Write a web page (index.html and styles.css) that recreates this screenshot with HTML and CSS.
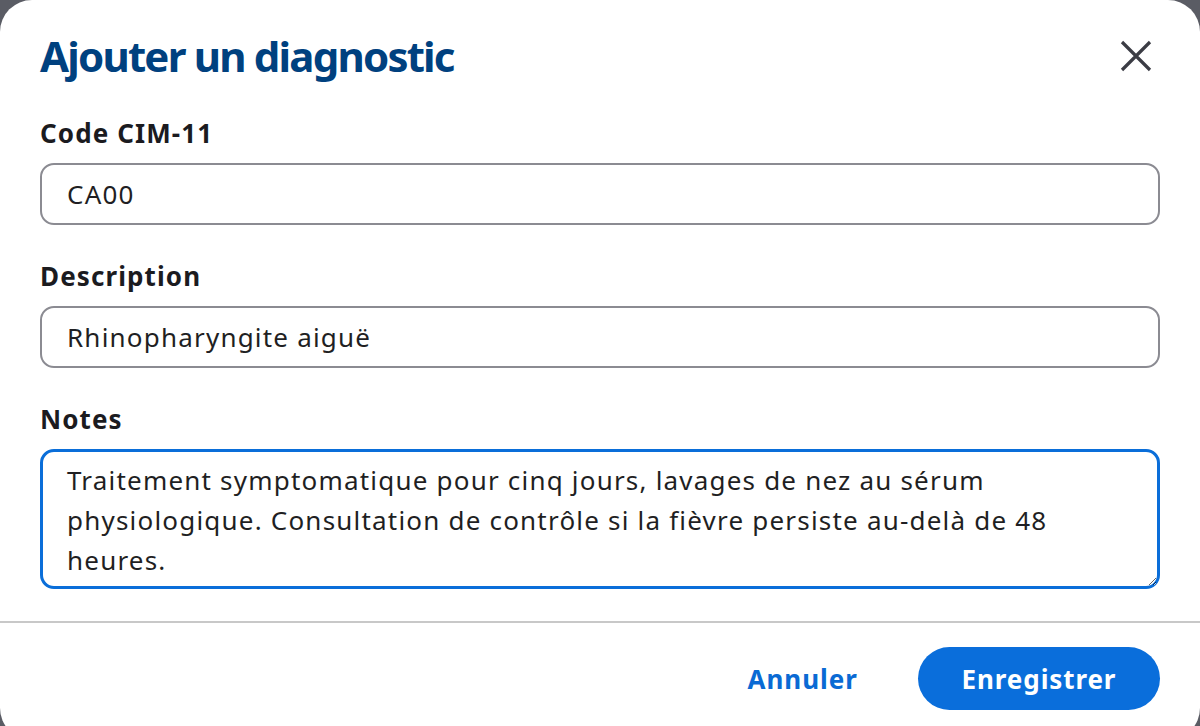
FILE: index.html
```html
<!DOCTYPE html>
<html lang="fr">
<head>
    <meta charset="UTF-8">
    <meta name="viewport" content="width=device-width, initial-scale=1.0">
    <title>Ajouter un diagnostic</title>
    <link rel="stylesheet" href="styles.css">
</head>
<body>
    <div class="dialog" role="dialog" aria-labelledby="dialogTitle">
        <div class="dialog-header">
            <h1 id="dialogTitle">Ajouter un diagnostic</h1>
            <button class="close-button" aria-label="Fermer">
                <svg width="32" height="32" viewBox="0 0 32 32">
                    <path d="M2 2 L30 30 M30 2 L2 30" stroke="#3b3c44" stroke-width="3.2" fill="none"/>
                </svg>
            </button>
        </div>

        <div class="dialog-body">
            <div class="field">
                <label for="code">Code CIM-11</label>
                <input type="text" id="code" value="CA00">
            </div>
            <div class="field">
                <label for="description">Description</label>
                <input type="text" id="description" value="Rhinopharyngite aiguë">
            </div>
            <div class="field">
                <label for="notes">Notes</label>
                <textarea id="notes" class="is-focused">Traitement symptomatique pour cinq jours, lavages de nez au sérum physiologique. Consultation de contrôle si la fièvre persiste au-delà de 48 heures.</textarea>
            </div>
        </div>

        <div class="dialog-footer">
            <button class="btn-text">Annuler</button>
            <button class="btn-primary">Enregistrer</button>
        </div>
    </div>
</body>
</html>
```

FILE: styles.css
```css
body {
    font-family: 'Noto Sans', 'Open Sans', sans-serif;
    background-color: #5a5c64;
    margin: 0;
    padding: 0;
    height: 100vh;
    overflow: hidden;
}

.dialog {
    background-color: #fff;
    border-radius: 32px;
    width: 1200px;
    height: 740px;
}

.dialog-header {
    display: flex;
    align-items: center;
    justify-content: space-between;
    padding: 30px 40px 0 40px;
}

h1 {
    color: #00417f;
    font-size: 42px;
    line-height: 52px;
    font-weight: bold;
    letter-spacing: -1.8px;
    margin: 0;
}

.close-button {
    width: 48px;
    height: 48px;
    display: flex;
    align-items: center;
    justify-content: center;
    background: none;
    border: none;
    padding: 0;
    cursor: pointer;
}

.dialog-body {
    padding: 33px 40px 32px 40px;
    border-bottom: 2px solid #c8c8c8;
}

.field {
    display: flex;
    flex-direction: column;
    margin-bottom: 33px;
}

.field:last-child {
    margin-bottom: 0;
}

label {
    font-size: 26px;
    line-height: 36px;
    font-weight: bold;
    letter-spacing: 1.1px;
    color: #1b1b1f;
    margin-bottom: 12px;
}

input[type="text"],
textarea {
    font-family: 'Noto Sans', 'Open Sans', sans-serif;
    font-size: 26px;
    letter-spacing: 1.2px;
    color: #1f1f23;
    border: 2px solid #8b8b92;
    border-radius: 14px;
    box-sizing: border-box;
    outline: none;
}

input[type="text"] {
    height: 62px;
    padding: 0 25px;
}

textarea {
    height: 140px;
    line-height: 40px;
    padding: 8px 24px 6px 24px;
    resize: vertical;
}

textarea.is-focused {
    border: 3px solid #0a6ed9;
}

.dialog-footer {
    display: flex;
    justify-content: flex-end;
    align-items: center;
    gap: 36px;
    padding: 24px 40px;
}

.btn-text {
    font-family: inherit;
    font-size: 26px;
    font-weight: bold;
    letter-spacing: 1px;
    color: #0a6ad4;
    background: none;
    border: none;
    padding: 0 24px;
    cursor: pointer;
}

.btn-primary {
    font-family: inherit;
    font-size: 26px;
    font-weight: bold;
    letter-spacing: 0.9px;
    color: #fff;
    background-color: #0a6edb;
    border: none;
    border-radius: 32px;
    height: 63px;
    width: 242px;
    cursor: pointer;
}
```
